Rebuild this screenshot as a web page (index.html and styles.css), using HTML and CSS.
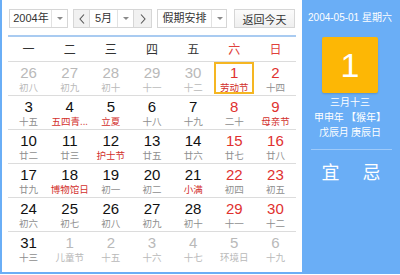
FILE: index.html
```html
<!DOCTYPE html>
<html lang="zh-CN">
<head>
<meta charset="utf-8">
<link rel="stylesheet" href="styles.css">
</head>
<body>
<div class="cal">
  <div class="main">
    <div class="toolbar">
      <div class="select year"><span class="sel-text">2004年</span><span class="sel-arrow"></span></div>
      <div class="month-group">
        <span class="nav prev"><svg width="6" height="10" viewBox="0 0 6 10"><polyline points="5,0.5 1,5 5,9.5" fill="none" stroke="#555" stroke-width="1.1"/></svg></span>
        <div class="select month"><span class="sel-text">5月</span><span class="sel-arrow"></span></div>
        <span class="nav next"><svg width="6" height="10" viewBox="0 0 6 10"><polyline points="1,0.5 5,5 1,9.5" fill="none" stroke="#555" stroke-width="1.1"/></svg></span>
      </div>
      <div class="select holiday"><span class="sel-text">假期安排</span><span class="sel-arrow"></span></div>
      <div class="btn today">返回今天</div>
    </div>
    <div class="rule"></div>
    <div class="week">
      <span>一</span><span>二</span><span>三</span><span>四</span><span>五</span><span class="we">六</span><span class="we">日</span>
    </div>
    <div class="grid">
      <div class="cell other"><b>26</b><i>初八</i></div>
      <div class="cell other"><b>27</b><i>初九</i></div>
      <div class="cell other"><b>28</b><i>初十</i></div>
      <div class="cell other"><b>29</b><i>十一</i></div>
      <div class="cell other"><b>30</b><i>十二</i></div>
      <div class="cell we sel"><b>1</b><i class="fest">劳动节</i></div>
      <div class="cell we"><b>2</b><i>十四</i></div>

      <div class="cell"><b>3</b><i>十五</i></div>
      <div class="cell"><b>4</b><i class="fest">五四青...</i></div>
      <div class="cell"><b>5</b><i class="fest">立夏</i></div>
      <div class="cell"><b>6</b><i>十八</i></div>
      <div class="cell"><b>7</b><i>十九</i></div>
      <div class="cell we"><b>8</b><i>二十</i></div>
      <div class="cell we"><b>9</b><i class="fest">母亲节</i></div>

      <div class="cell"><b>10</b><i>廿二</i></div>
      <div class="cell"><b>11</b><i>廿三</i></div>
      <div class="cell"><b>12</b><i class="fest">护士节</i></div>
      <div class="cell"><b>13</b><i>廿五</i></div>
      <div class="cell"><b>14</b><i>廿六</i></div>
      <div class="cell we"><b>15</b><i>廿七</i></div>
      <div class="cell we"><b>16</b><i>廿八</i></div>

      <div class="cell"><b>17</b><i>廿九</i></div>
      <div class="cell"><b>18</b><i class="fest">博物馆日</i></div>
      <div class="cell"><b>19</b><i>初一</i></div>
      <div class="cell"><b>20</b><i>初二</i></div>
      <div class="cell"><b>21</b><i class="fest">小满</i></div>
      <div class="cell we"><b>22</b><i>初四</i></div>
      <div class="cell we"><b>23</b><i>初五</i></div>

      <div class="cell"><b>24</b><i>初六</i></div>
      <div class="cell"><b>25</b><i>初七</i></div>
      <div class="cell"><b>26</b><i>初八</i></div>
      <div class="cell"><b>27</b><i>初九</i></div>
      <div class="cell"><b>28</b><i>初十</i></div>
      <div class="cell we"><b>29</b><i>十一</i></div>
      <div class="cell we"><b>30</b><i>十二</i></div>

      <div class="cell last"><b>31</b><i>十三</i></div>
      <div class="cell other last"><b>1</b><i>儿童节</i></div>
      <div class="cell other last"><b>2</b><i>十五</i></div>
      <div class="cell other last"><b>3</b><i>十六</i></div>
      <div class="cell other last"><b>4</b><i>十七</i></div>
      <div class="cell other last"><b>5</b><i>环境日</i></div>
      <div class="cell other last"><b>6</b><i>十九</i></div>
    </div>
  </div>
  <div class="side">
    <div class="side-date">2004-05-01 星期六</div>
    <div class="big-day">1</div>
    <div class="lunar">三月十三</div>
    <div class="lunar">甲申年 【猴年】</div>
    <div class="lunar">戊辰月 庚辰日</div>
    <div class="side-rule"></div>
    <div class="yiji"><span>宜</span><span>忌</span></div>
  </div>
</div>
</body>
</html>
```

FILE: styles.css
```css
* { box-sizing: border-box; }
html, body { margin: 0; padding: 0; background: #fff; }
body { font-family: "Liberation Sans", "Noto Sans CJK SC", sans-serif; }

.cal {
  width: 400px;
  height: 274px;
  display: flex;
  border: 2px solid #6aaef6;
  border-top: none;
}

.main {
  width: 300px;
  padding: 9px 4px 0 6px;
  background: #fff;
}

.toolbar {
  display: flex;
  height: 19px;
  padding-left: 1px;
  font-size: 11px;
  color: #333;
}

.select {
  display: flex;
  align-items: stretch;
  border: 1px solid #d6d6d6;
  background: #fff;
}
.sel-text {
  flex: 1;
  display: flex;
  align-items: center;
  justify-content: center;
  line-height: 17px;
}
.sel-arrow {
  width: 16px;
  border-left: 1px solid #e2e2e2;
  position: relative;
}
.sel-arrow::after {
  content: "";
  position: absolute;
  left: 5px;
  top: 7px;
  border-top: 3px solid #8a8a8a;
  border-left: 3px solid transparent;
  border-right: 3px solid transparent;
}

.year { width: 59px; }
.year .sel-text { padding-left: 1px; }

.month-group {
  display: flex;
  margin-left: 5px;
  border: 1px solid #d6d6d6;
  width: 79px;
}
.month-group .select { border: none; border-left: 1px solid #d6d6d6; border-right: 1px solid #d6d6d6; width: 45px; }
.nav {
  display: flex;
  align-items: center;
  justify-content: center;
  background: #f1f1f1;
}
.prev { width: 15px; }
.next { flex: 1; }

.holiday { width: 70px; margin-left: 5px; }
.holiday .sel-arrow { width: 15px; }

.btn {
  margin-left: 7px;
  width: 61px;
  border: 1px solid #d6d6d6;
  background: linear-gradient(#fbfbfb, #efefef);
  display: flex;
  align-items: center;
  justify-content: center;
}

.rule {
  height: 2px;
  margin-top: 7px;
  background: #a9cbf1;
  width: 288px;
}

.week {
  display: grid;
  grid-template-columns: repeat(7, minmax(0, 1fr));
  width: 288px;
  height: 25px;
  border-bottom: 1px solid #dcdcdc;
  font-size: 12px;
  color: #333;
  text-align: center;
  line-height: 24px;
  font-family: "Noto Sans CJK SC", sans-serif;
}
.week .we { color: #e0413b; }

.grid {
  display: grid;
  grid-template-columns: repeat(7, minmax(0, 1fr));
  width: 288px;
}
.cell {
  min-width: 0;
  height: 34px;
  border-bottom: 1px solid #dcdcdc;
  text-align: center;
  padding-top: 2px;
  position: relative;
}
.cell.last { border-bottom: none; }
.cell b {
  display: block;
  font-weight: normal;
  font-size: 15px;
  line-height: 17px;
  color: #111;
}
.cell i {
  display: block;
  font-style: normal;
  font-size: 9.5px;
  line-height: 13px;
  color: #8e8e8e;
  font-family: "Noto Sans CJK SC", sans-serif;
  white-space: nowrap;
}
.cell.we b { color: #e0312f; }
.cell i.fest { color: #d2302c; }
.cell.other b, .cell.other i { color: #b9b9b9; }
.cell.sel::after {
  content: "";
  position: absolute;
  left: 0;
  top: 0;
  right: 1px;
  bottom: 1px;
  border: 2px solid #f5b622;
}

.side {
  flex: 1;
  background: #6aaef6;
  color: #fff;
  text-align: center;
  padding-top: 12px;
  font-family: "Liberation Sans", "Noto Sans CJK SC", sans-serif;
}
.side-date { font-size: 10px; line-height: 12px; }
.big-day {
  width: 56px;
  height: 56px;
  margin: 13px auto 0;
  background: #fdb705;
  border-radius: 2px;
  box-shadow: 0 1px 2px rgba(0,0,0,0.15);
  font-size: 34px;
  line-height: 56px;
}
.lunar {
  font-size: 10px;
  line-height: 15px;
  font-family: "Noto Sans CJK SC", sans-serif;
}
.big-day + .lunar { margin-top: 1px; }
.side-rule {
  height: 1px;
  background: #9ecafa;
  margin: 10px 6px 0 9px;
}
.yiji {
  display: flex;
  justify-content: center;
  gap: 23px;
  margin-top: 11px;
  font-size: 18px;
  line-height: 20px;
  padding-left: 2px;
  font-family: "Noto Sans CJK SC", sans-serif;
}
```
